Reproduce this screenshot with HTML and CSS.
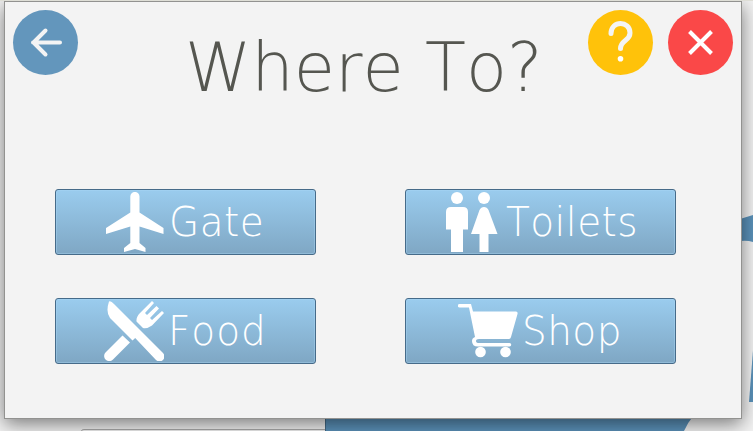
FILE: index.html
```
<!DOCTYPE html>
<html lang="en">
<head>
<meta charset="utf-8">
<title>Where To?</title>
<link rel="stylesheet" href="styles.css">
</head>
<body>
<svg class="backdrop" viewBox="0 0 753 431" aria-hidden="true">
  <rect width="753" height="431" fill="#f3f3f3"/>
  <path d="M0 .5H753" stroke="#deded6"/>
  <path d="M81.500 431V431Q81.500 429.500 84 429.500H325" fill="none" stroke="#aaa"/>
  <path d="M325 400H710Q690 416 684 431H325Z" fill="#5b92ba"/>
  <path d="M325.500 418V431" stroke="#456b86"/>
  <path d="M740 219L753 215V242Q747 240 740 241Z" fill="#5b92ba"/>
  <path d="M753 350L749 402H753Z" fill="#5b92ba"/>
</svg>
<main class="dialog">
  <header class="bar">
    <button class="round back" aria-label="Back"><svg viewBox="0 0 65 65"><path d="M47 32.500H20M32.500 20.500L20.500 32.500L32.500 44.500"/></svg></button>
    <h1 class="title">Where To?</h1>
    <button class="round help" aria-label="Help"><svg viewBox="0 0 65 65"><path d="M23 23.500C23 10 42 10.500 42 23C42 31 32.500 30 32.500 38.500"/><circle cx="32.500" cy="48.700" r="2.800"/></svg></button>
    <button class="round close" aria-label="Close"><svg viewBox="0 0 65 65"><path d="M21.500 21.500L43.500 43.500M43.500 21.500L21.500 43.500"/></svg></button>
  </header>
  <section class="choices">
    <button class="choice gate"><svg viewBox="0 0 60 60"><path d="M26.300 4.500A4.600 4.600 0 0 1 35.500 4.500V20.500L59.500 36V42L35.500 34.500V51L41.500 56V60L31 57L20 60V56L26.300 51V34.500L2 42V36L26.300 20.500Z"/></svg><span>Gate</span></button>
    <button class="choice toilets"><svg viewBox="0 0 60 60"><circle cx="16" cy="6" r="6"/><circle cx="43" cy="6" r="6"/><path d="M10 15H22Q27 15 27 20V37.500H22V60H10V37.500H5V20Q5 15 10 15ZM38.500 18Q40 15 43 15Q46 15 47.500 18L56.500 42H47.500V60H38.500V42H30Z"/></svg><span>Toilets</span></button>
    <button class="choice food"><svg viewBox="0 0 60 60"><path d="M5 .5Q7 -.5 10 3L59 52A4.900 4.900 0 0 1 52 59L31.200 37L28.500 39.500L6 17Q1.500 11 5 .5ZM18.500 34.500L26 41.500L9 58.500A5 5 0 0 1 1.500 51.500ZM48 0L50 2L41 12L43 14L52.500 5L55 7.500L46 17L48 19L58 10L60 12L48 24.500Q43 28 39 27L32.500 20.500Q32 16 36 12Z"/></svg><span>Food</span></button>
    <button class="choice shop"><svg viewBox="0 0 60 60"><path d="M1.500 3H13L15 10.500H58Q60 10.500 59.500 13L53 36Q52.500 38 51 38H21Q18 38 18 40Q18 42 21 42H51.500A1.500 1.500 0 0 1 51.500 45.500H20Q14 45.500 14 40Q14 37 17 36L11 6.500H1.500A1.700 1.700 0 0 1 1.500 3Z"/><circle cx="22.500" cy="51" r="5.300"/><circle cx="47.500" cy="51" r="5.300"/></svg><span>Shop</span></button>
  </section>
</main>
</body>
</html>
```
FILE: styles.css
```
* { box-sizing: border-box; }
body { margin: 0; width: 753px; height: 431px; overflow: hidden; font-family: "DejaVu Sans", sans-serif; }
.backdrop { position: absolute; inset: 0; width: 753px; height: 431px; }
.dialog { position: relative; width: 738px; height: 418px; margin: 1px 0 0 4px; border: 1px solid #929290; background: #f3f3f3; box-shadow: 0 5px 18px rgba(0,0,0,.5); clip-path: inset(0 -30px -30px -30px); }
.bar { display: flex; height: 187px; padding: 8px 8px 0; }
button { margin: 0; border: 0; padding: 0; font-family: inherit; }
.round { flex: none; width: 65px; height: 65px; border-radius: 50%; }
.round svg { display: block; width: 65px; height: 65px; fill: none; stroke: #f4f4f4; stroke-linecap: round; stroke-linejoin: round; stroke-width: 4; }
.back { background: #6396bc; }
.help { background: #ffc20a; margin-right: 15px; }
.help svg { stroke-width: 5; }
.help circle { fill: #fff; stroke: none; }
.close { background: #fa4848; }
.close svg { stroke: #fff; stroke-linecap: butt; }
.title { flex: 1; min-width: 0; margin: 12px 0 0 107px; color: #555650; font-size: 67px; line-height: 92px; font-weight: 200; font-kerning: none; white-space: nowrap; }
.choices { display: grid; grid-template-columns: 261px 271px; grid-template-rows: 66px 66px; column-gap: 89px; row-gap: 43px; padding-left: 50px; }
.choice { display: flex; align-items: center; gap: 4px; border: 1px solid #466b89; border-radius: 3px; background: linear-gradient(#9accee, #7fa7c4); box-shadow: inset 0 0 0 1px rgba(170,215,245,.4); color: #fff; font-size: 41px; line-height: 60px; font-weight: 200; font-kerning: none; }
.choice svg { flex: none; width: 60px; height: 60px; fill: #fff; }
.choice span { transform: scaleX(.95); transform-origin: 0 50%; letter-spacing: .5px; white-space: nowrap; }
.gate { padding-left: 48px; }
.toilets { padding-left: 35px; }
.food { padding-left: 48px; }
.shop { padding-left: 52px; }
.gate span, .toilets span { margin-left: 1px; }
.food span { letter-spacing: 1px; }
```
